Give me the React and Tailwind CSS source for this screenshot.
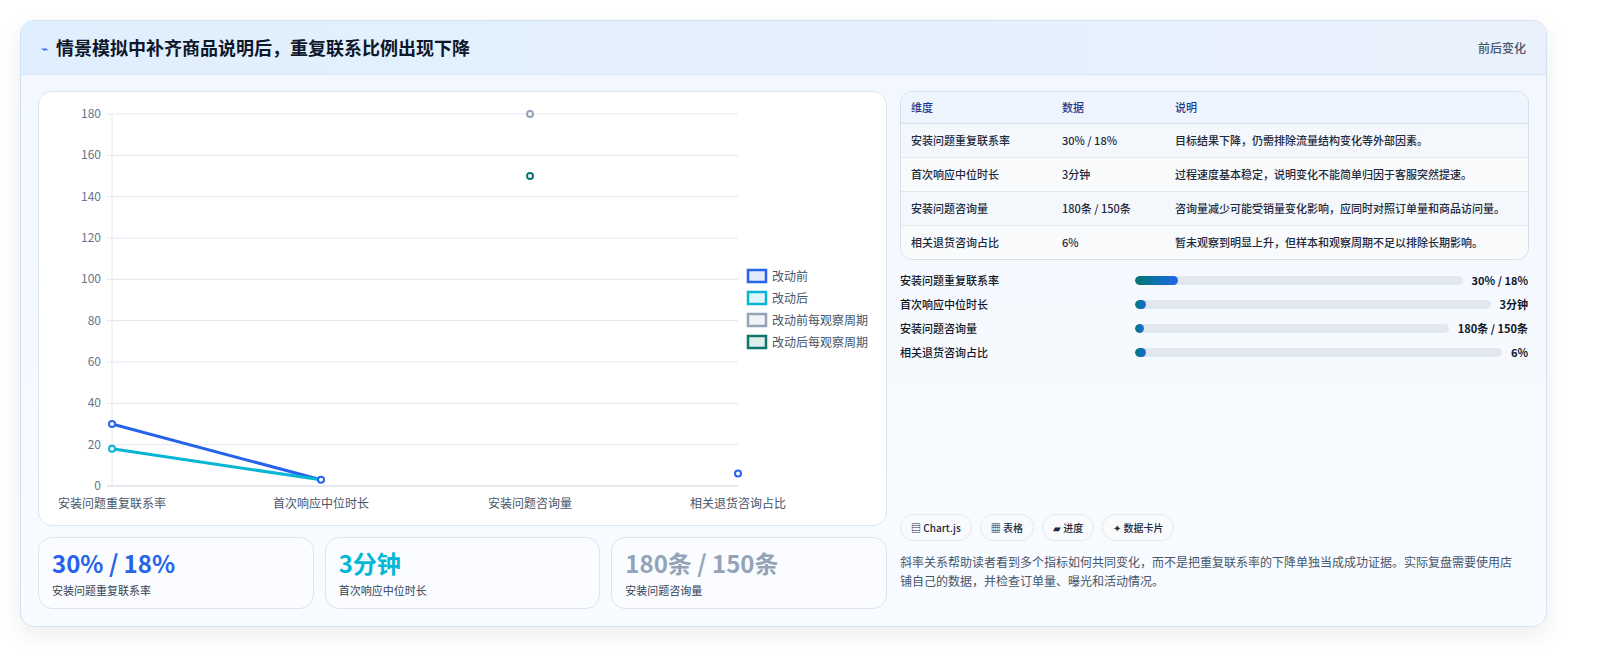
import React from "react";

const F = { fontFamily: '"Noto Sans CJK SC", "Noto Sans", sans-serif' };

function Chart() {
  const xs = [111, 320, 529, 737];
  const y = (v) => 485 - v * (372 / 180);
  const ticks = [0, 20, 40, 60, 80, 100, 120, 140, 160, 180];
  const cats = ["安装问题重复联系率", "首次响应中位时长", "安装问题咨询量", "相关退货咨询占比"];
  const legend = [
    ["改动前", "#2563eb"],
    ["改动后", "#06b6d4"],
    ["改动前每观察周期", "#94a3b8"],
    ["改动后每观察周期", "#0f766e"],
  ];
  return (
    <svg width="849" height="435" viewBox="38 91 849 435" className="block" style={F}>
      {ticks.map((t) => (
        <g key={t}>
          <line x1="106" x2="737" y1={y(t)} y2={y(t)} stroke={t === 0 ? "#cbd5e1" : "#e2e8f0"} />
          <text x="100" y={y(t) + 4} textAnchor="end" fontSize="12" fill="#64748b">{t}</text>
        </g>
      ))}
      <line x1="111" x2="111" y1="113" y2="485" stroke="#e2e8f0" />
      {cats.map((c, i) => (
        <text key={c} x={xs[i]} y="507" textAnchor="middle" fontSize="12" fill="#475569">{c}</text>
      ))}
      <polyline points={`${xs[0]},${y(30)} ${xs[1]},${y(3)}`} fill="none" stroke="#2563eb" strokeWidth="3" />
      <polyline points={`${xs[0]},${y(18)} ${xs[1]},${y(3)}`} fill="none" stroke="#06b6d4" strokeWidth="3" />
      {[
        [xs[0], 30, "#2563eb"], [xs[0], 18, "#06b6d4"], [xs[1], 3, "#2563eb"],
        [xs[3], 6, "#2563eb"], [xs[2], 180, "#94a3b8"], [xs[2], 150, "#0f766e"],
      ].map(([cx, v, c], i) => (
        <circle key={i} cx={cx} cy={y(v)} r="3" fill="#fff" stroke={c} strokeWidth="2" />
      ))}
      {legend.map(([l, c], i) => (
        <g key={l}>
          <rect x="747" y={269 + i * 22} width="18" height="12" fill={c + "22"} stroke={c} strokeWidth="2.5" />
          <text x="771" y={280 + i * 22} fontSize="12" fill="#475569">{l}</text>
        </g>
      ))}
    </svg>
  );
}

const rows = [
  ["安装问题重复联系率", "30% / 18%", "目标结果下降，仍需排除流量结构变化等外部因素。"],
  ["首次响应中位时长", "3分钟", "过程速度基本稳定，说明变化不能简单归因于客服突然提速。"],
  ["安装问题咨询量", "180条 / 150条", "咨询量减少可能受销量变化影响，应同时对照订单量和商品访问量。"],
  ["相关退货咨询占比", "6%", "暂未观察到明显上升，但样本和观察周期不足以排除长期影响。"],
];

const bars = [
  ["安装问题重复联系率", "30% / 18%", 13],
  ["首次响应中位时长", "3分钟", 3],
  ["安装问题咨询量", "180条 / 150条", 3],
  ["相关退货咨询占比", "6%", 3],
];

export default function App() {
  return (
    <div className="w-full h-[660px] overflow-hidden bg-white pt-[20px] pl-[20px]" style={F}>
      <div className="w-[1527px] h-[607px] rounded-[14px] border border-[#cfe3f5] bg-gradient-to-b from-[#f3f8fe] to-[#f8fbff] shadow-[0_8px_24px_rgba(15,23,42,0.08)] overflow-hidden">
        <div className="h-[54px] flex items-center justify-between px-[20px] bg-gradient-to-r from-[#e0effd] to-[#eaf1fd] border-b border-[#d6e6f5]">
          <div className="flex items-center gap-[8px]">
            <span className="text-[#2563eb] text-[12px]">⌁</span>
            <span className="text-[18px] font-bold text-[#0f172a]">情景模拟中补齐商品说明后，重复联系比例出现下降</span>
          </div>
          <span className="text-[12px] text-[#475569] font-medium">前后变化</span>
        </div>
        <div className="flex px-[17px] pt-[16px] gap-[13px]">
          <div className="w-[849px] shrink-0 flex flex-col gap-[11px]">
            <div className="h-[435px] bg-white rounded-[14px] border border-[#dbe6f3] overflow-hidden">
              <Chart />
            </div>
            <div className="flex gap-[11px]">
              {[
                ["30% / 18%", "安装问题重复联系率", "text-[#2563eb]"],
                ["3分钟", "首次响应中位时长", "text-[#06b6d4]"],
                ["180条 / 150条", "安装问题咨询量", "text-[#94a3b8]"],
              ].map(([v, l, c]) => (
                <div key={l} className="w-[276px] h-[72px] rounded-[14px] border border-[#dbe6f3] bg-[#fafcff] px-[13px] pt-[8px]">
                  <div className={`text-[24px] font-bold leading-[34px] ${c}`}>{v}</div>
                  <div className="text-[11px] text-[#334155] mt-[2px]">{l}</div>
                </div>
              ))}
            </div>
          </div>
          <div className="w-[629px] shrink-0 flex flex-col">
            <div className="rounded-[12px] border border-[#d3dfec] overflow-hidden text-[11px] font-medium text-[#1e293b]">
              <div className="flex h-[32px] items-center bg-[#eef5fe] border-b border-[#d3dfec] text-[#1e3a8a]">
                <div className="w-[161px] pl-[10px]">维度</div>
                <div className="w-[113px]">数据</div>
                <div className="flex-1">说明</div>
              </div>
              {rows.map((r, i) => (
                <div key={i} className={`flex py-[8px] leading-[17px] ${i % 2 ? "bg-[#f8fafc]" : "bg-[#f4f8fd]"} ${i < 3 ? "border-b border-[#e2e8f0]" : ""}`}>
                  <div className="w-[161px] pl-[10px]">{r[0]}</div>
                  <div className="w-[113px]">{r[1]}</div>
                  <div className="flex-1 pr-[14px]">{r[2]}</div>
                </div>
              ))}
            </div>
            <div className="mt-[12px] flex flex-col gap-[8px]">
              {bars.map(([l, v, p]) => (
                <div key={l} className="flex items-center h-[16px] text-[11px] font-medium text-[#0f172a]">
                  <div className="w-[230px] shrink-0">{l}</div>
                  <div className="flex-1 h-[9px] rounded-full bg-[#e2e8f0] mx-[5px] overflow-hidden">
                    <div className="h-full rounded-full bg-gradient-to-r from-[#0f766e] to-[#2563eb]" style={{ width: `${p}%` }} />
                  </div>
                  <div className="shrink-0 font-bold pl-[4px] pr-[1px]">{v}</div>
                </div>
              ))}
            </div>
            <div className="flex gap-[8px] mt-[154px]">
              {["▤ Chart.js", "▦ 表格", "▰ 进度", "✦ 数据卡片"].map((t) => (
                <span key={t} className="h-[27px] px-[10px] flex items-center rounded-full border border-[#e2e8f0] bg-[#f8fafc] text-[10px] font-medium text-[#1e293b]">{t}</span>
              ))}
            </div>
            <p className="mt-[11px] text-[12px] leading-[19px] text-[#475569] pr-[10px]">斜率关系帮助读者看到多个指标如何共同变化，而不是把重复联系率的下降单独当成成功证据。实际复盘需要使用店铺自己的数据，并检查订单量、曝光和活动情况。</p>
          </div>
        </div>
      </div>
    </div>
  );
}
